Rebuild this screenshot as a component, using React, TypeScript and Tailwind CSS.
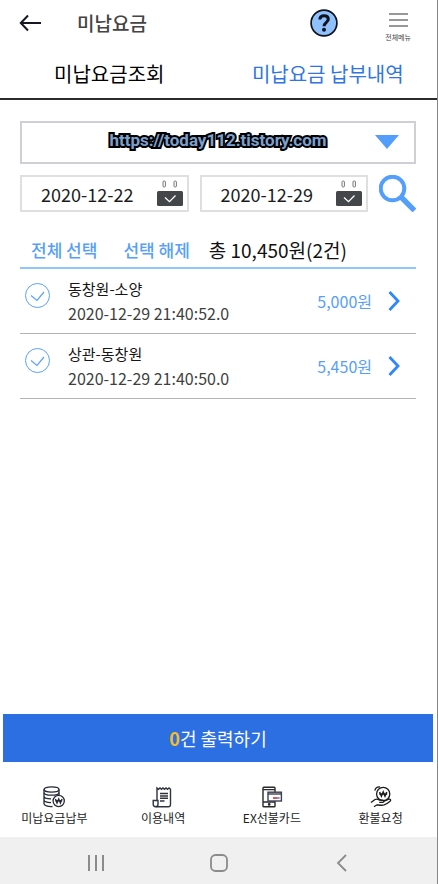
import { useState } from "react";
import type { ReactNode } from "react";

interface Payment {
  id: number;
  route: string;
  paidAt: string;
  amount: string;
}

const payments: Payment[] = [
  { id: 1, route: "동창원-소양", paidAt: "2020-12-29 21:40:52.0", amount: "5,000원" },
  { id: 2, route: "상관-동창원", paidAt: "2020-12-29 21:40:50.0", amount: "5,450원" },
];

const CoinsIcon = () => (
  <svg viewBox="0 0 22 22" className="size-[22px]" fill="none" stroke="#252a36" strokeWidth="1.3">
    <ellipse cx="8.5" cy="3.5" rx="7.500" ry="2.6" />
    <path d="M1 3.5v3c0 1.600 3.200 2.700 7.500 2.700s7.500-1.100 7.500-2.700v-3" />
    <path d="M1 6.800v3.400c0 1.500 2.800 2.600 7 2.700M1 10.400v3.600c0 1.400 2.600 2.400 7 2.700M1 14v3.800c0 1.600 3.600 3 8.500 2.700M16 6.500v2.500" />
    <circle cx="15.700" cy="15" r="5.600" fill="#fff" />
    <path d="M12.400 13l1.600 4 1.700-4 1.700 4 1.600-4M12.200 14.700h7" strokeWidth="1.400" />
  </svg>
);

const ReceiptIcon = () => (
  <svg viewBox="0 0 22 22" className="size-[22px]" fill="none" stroke="#30333f" strokeWidth="1.4">
    <path d="M5 14.5V2l1.5 1.3L8 2l1.5 1.3L11 2l1.5 1.3L14 2l1.5 1.3L17 2l1.5 1.3V18.5a2.2 2.2 0 0 1-2.2 2.2H4" />
    <path d="M5 14.5H1.2v3.8c0 1.5 1 2.4 2.4 2.4s2.4-.9 2.4-2.4v-3.8z" fill="#fff" />
    <path d="M8 7.5h8M8 10h8M8 12.3h8M8 15h4.5" />
  </svg>
);

const CardIcon = () => (
  <svg viewBox="0 0 22 22" className="size-[22px]" fill="none" stroke="#292929" strokeWidth="1.4">
    <rect x="2" y="1.2" width="12" height="19.6" rx=".8" />
    <path d="M2 3.6h12M2 16h12" />
    <circle cx="8.2" cy="18.4" r=".7" fill="#292929" />
    <rect x="7" y="6.2" width="13.4" height="8.8" fill="#fff" stroke="#3a4050" />
    <path d="M7 8h13.4" stroke="#3a4050" />
    <path d="M12 12h4" stroke="#e04040" strokeWidth="1.8" />
    <path d="M16 12h2.6" stroke="#7a85e8" strokeWidth="1.8" />
  </svg>
);

const RefundIcon = () => (
  <svg viewBox="0 0 22 22" className="size-[22px]" fill="none" stroke="#1b1b1b" strokeWidth="1.3">
    <circle cx="13.2" cy="8" r="6.6" />
    <path d="M9.6 6l1.8 4.2L13.2 6l1.8 4.2L16.8 6M9.2 8h8" strokeWidth="1.5" />
    <path d="M10 1C7.500 .8 5.500 2 4.800 4.500" />
    <path d="M1 16.500l4-3c1.700-.8 3.200-.4 4.600.6h3c1.700 0 1.700 2.200 0 2.300H9.200M13.800 15.500l5-2.300c1.600-.6 2.500 1 1.300 2-2 1.700-4 3-6 3.700-2.500.8-5 .1-7.200-.1L4 20.800" />
  </svg>
);

const menus: { label: string; icon: ReactNode }[] = [
  { label: "미납요금납부", icon: <CoinsIcon /> },
  { label: "이용내역", icon: <ReceiptIcon /> },
  { label: "EX선불카드", icon: <CardIcon /> },
  { label: "환불요청", icon: <RefundIcon /> },
];

const DateField = ({ label, initial }: { label: string; initial: string }) => (
  <div className="flex h-[37px] min-w-0 flex-1 items-center border-2 border-[#dfdfe2] pr-1">
    <input
      type="text"
      aria-label={label}
      defaultValue={initial}
      className="w-0 min-w-0 flex-1 pl-[19px] text-lg leading-6 text-[#1c1c1c] outline-none"
    />
    <button type="button" aria-label={`${label} 선택`}>
      <svg viewBox="0 0 26 27" className="h-[27px] w-[26px]" fill="none">
        <rect x="6" y="1" width="2.400" height="6" rx="1" stroke="#777" />
        <rect x="17" y="1" width="2.400" height="6" rx="1" stroke="#777" />
        <rect x="0" y="11" width="26" height="15" rx="1.500" fill="#44474a" />
        <path d="M8 17.500l4.500 4.200 6-6.200" stroke="#fff" strokeWidth="1.300" />
      </svg>
    </button>
  </div>
);

const PaymentRow = ({
  payment,
  checked,
  onToggle,
}: {
  payment: Payment;
  checked: boolean;
  onToggle: () => void;
}) => (
  <li className="flex h-[65px] items-center border-b border-[#b4b4b4] pr-4 pl-[5px]">
    <label className="relative mb-3 size-[25px] shrink-0">
      <input
        type="checkbox"
        checked={checked}
        onChange={onToggle}
        aria-label={payment.route}
        className="block size-[25px] appearance-none rounded-full border border-[#5aa2fa] checked:bg-blue-100"
      />
      <svg viewBox="0 0 25 25" className="pointer-events-none absolute inset-0" fill="none" stroke="#5aa2fa" strokeWidth="1.2">
        <path d="M6 12.500l6 5 7-8.500" />
      </svg>
    </label>
    <div className="ml-[18px] min-w-0 flex-1">
      <p className="text-[15px] leading-6 text-[#151515]">{payment.route}</p>
      <p className="text-base leading-6 whitespace-nowrap text-[#3f3f3f]">{payment.paidAt}</p>
    </div>
    <button type="button" className="flex items-center gap-4 text-base leading-6 text-[#589ff8]">
      {payment.amount}
      <svg viewBox="0 0 12 20" className="h-5 w-3" fill="none" stroke="#2e87fb" strokeWidth="2.800">
        <path d="M1.500 1l8.500 9-8.500 9" />
      </svg>
    </button>
  </li>
);

export default function App() {
  const [selected, setSelected] = useState<number[]>([]);

  const toggle = (id: number) =>
    setSelected((prev) => (prev.includes(id) ? prev.filter((v) => v !== id) : [...prev, id]));

  return (
    <div className="flex min-h-screen flex-col border-r border-[#858585] bg-white font-['Noto_Sans_CJK_KR',sans-serif]">
      <header className="flex h-[46px] items-center pr-[26px] pl-[19px]">
        <button type="button" aria-label="뒤로">
          <svg viewBox="0 0 23 18" className="h-[18px] w-[23px]" fill="none" stroke="#151821" strokeWidth="2">
            <path d="M22 9H2M9 1.500L1.800 9 9 16.500" />
          </svg>
        </button>
        <h1 className="ml-[35px] flex-1 text-[19px] leading-6 font-medium text-[#444]">미납요금</h1>
        <button type="button" aria-label="도움말">
          <svg viewBox="0 0 28 28" className="size-7" fill="none" stroke="#10131a">
            <circle cx="14" cy="14" r="12.900" fill="#8fc1ff" strokeWidth="1.700" />
            <path d="M9.800 10.500c.2-2.500 2-3.700 4.300-3.700 2.500 0 4.200 1.400 4.200 3.500 0 3-4.200 3.300-4.200 6.900" strokeWidth="3" />
            <circle cx="14" cy="20.700" r="2" fill="#10131a" stroke="none" />
          </svg>
        </button>
        <button type="button" className="ml-[47px] flex flex-col items-center gap-1.5 pt-2 text-[7px] leading-2 text-[#444]">
          <svg viewBox="0 0 19 14" className="h-[14px] w-[19px]" stroke="#777" strokeWidth="1.300">
            <path d="M0 1h19M0 7h19M0 13h19" />
          </svg>
          전체메뉴
        </button>
      </header>

      <nav className="grid h-[54px] grid-cols-2 border-b-2 border-[#2c2a2c] pt-1 text-xl leading-7">
        <button type="button" className="text-black">미납요금조회</button>
        <button type="button" className="text-[#2f76e4]">미납요금 납부내역</button>
      </nav>

      <main className="flex-1 pt-[21px] pr-[21px] pl-5">
        <div className="relative">
          <select
            aria-label="차량 선택"
            className="block h-[43px] w-full appearance-none border-2 border-[#cfcfd6] bg-white"
          >
            <option value=""></option>
          </select>
          <svg viewBox="0 0 24 14" className="pointer-events-none absolute top-[14px] right-[17px] h-[14px] w-6" fill="#539efc">
            <path d="M0 0h24L12 14z" />
          </svg>
          <span className="pointer-events-none absolute inset-x-0 top-[7px] text-center font-[Roboto,sans-serif] text-[17px] leading-6 font-bold text-[#7ba0cd] [-webkit-text-stroke:4px_black] [paint-order:stroke_fill]">
            https://today112.tistory.com
          </span>
        </div>

        <div className="mt-[11px] flex items-center gap-[11px]">
          <DateField label="시작일" initial="2020-12-22" />
          <DateField label="종료일" initial="2020-12-29" />
          <button type="button" aria-label="조회">
            <svg viewBox="0 0 37 37" className="size-[37px]" fill="none" stroke="#559ffc">
              <circle cx="13.500" cy="13.500" r="11.800" strokeWidth="4" />
              <path d="M22 22l13.500 13.500" strokeWidth="5.400" />
            </svg>
          </button>
        </div>

        <div className="mt-6 flex h-[33px] items-center border-b-2 border-[#8fc6fe] pb-[3px] pl-[11px] whitespace-nowrap">
          <button
            type="button"
            onClick={() => setSelected(payments.map((p) => p.id))}
            className="text-[17px] leading-6 font-medium text-[#579ff8]"
          >
            전체 선택
          </button>
          <button
            type="button"
            onClick={() => setSelected([])}
            className="ml-[26px] text-[17px] leading-6 font-medium text-[#579ff8]"
          >
            선택 해제
          </button>
          <p className="ml-[19px] text-[19px] leading-6 text-[#111]">총 10,450원(2건)</p>
        </div>

        <ul>
          {payments.map((payment) => (
            <PaymentRow
              key={payment.id}
              payment={payment}
              checked={selected.includes(payment.id)}
              onToggle={() => toggle(payment.id)}
            />
          ))}
        </ul>
      </main>

      <div className="pr-1 pl-[3px]">
        <button type="button" className="h-12 w-full bg-[#2b6fe2] text-lg leading-6 text-white">
          <span className="font-bold text-[#f8bd20]">{selected.length}</span>건 출력하기
        </button>
      </div>

      <nav className="grid h-[75px] grid-cols-4 pt-6 pr-0.5">
        {menus.map((menu) => (
          <a key={menu.label} href="#" className="flex flex-col items-center text-xs leading-5 text-[#222]">
            {menu.icon}
            {menu.label}
          </a>
        ))}
      </nav>

      <footer className="grid h-[47px] grid-cols-3 items-center justify-items-center bg-[#f0f0f0] px-[34px] pt-1">
        <button type="button" aria-label="최근 앱">
          <svg viewBox="0 0 18 18" className="size-[18px]" stroke="#8b8b8b" strokeWidth="2">
            <path d="M2 1v16M9 1v16M16 1v16" />
          </svg>
        </button>
        <button type="button" aria-label="홈">
          <svg viewBox="0 0 18 18" className="size-[18px]" fill="none" stroke="#8b8b8b" strokeWidth="1.800">
            <rect x="1" y="1" width="16" height="16" rx="4.500" />
          </svg>
        </button>
        <button type="button" aria-label="이전">
          <svg viewBox="0 0 18 18" className="size-[18px]" fill="none" stroke="#8b8b8b" strokeWidth="1.800">
            <path d="M13 1L5 9l8 8" />
          </svg>
        </button>
      </footer>
    </div>
  );
}
